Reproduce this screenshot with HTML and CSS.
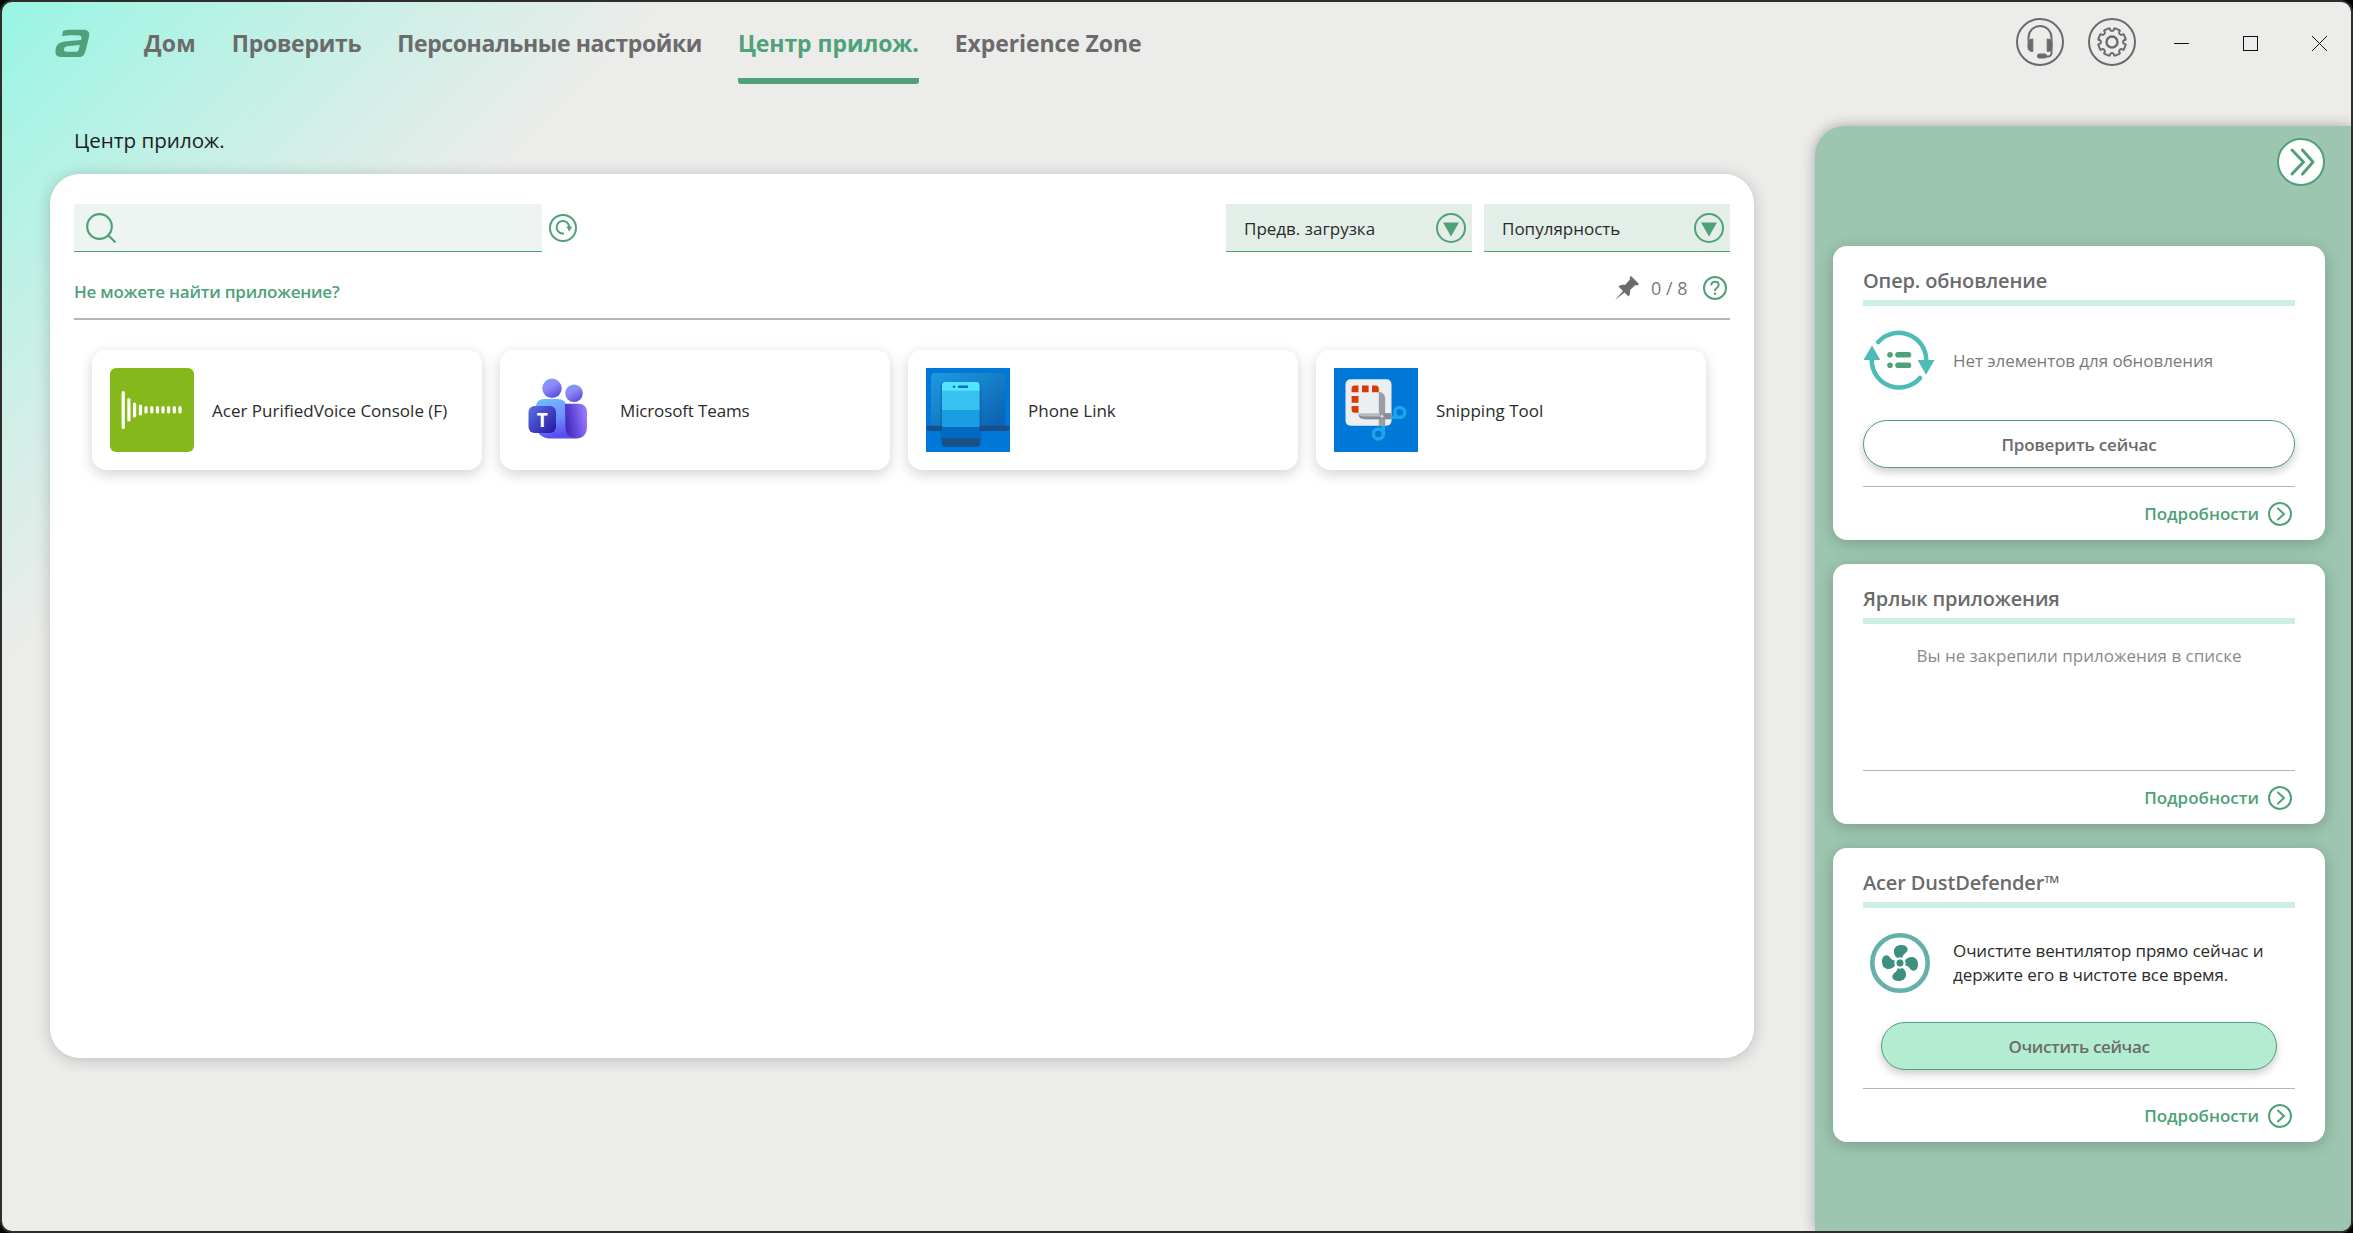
FILE: index.html
```html
<!DOCTYPE html>
<html lang="ru">
<head>
  <meta charset="UTF-8" />
  <title>Центр прилож.</title>
  <link rel="stylesheet" href="styles.css">
</head>
<body>
  <div class="window">
    <header class="topbar">
      <svg class="logo" width="36" height="28" viewBox="0 0 36 28">
        <path fill="#4ea178" fill-rule="evenodd" d="M8 2C10 1 13 .8 17 .8H28C33 .8 35 3 34 8L30.500 22C29.500 26 27.500 28 24 28H8C2 28 0 26.500 .5 21C1.500 14 6 12.800 12 12.200L26 11C27 8.200 26.500 6.800 24.500 6.600C19 6 12 6 7 7ZM12 17.300L24.800 15.900L23.800 20.500C23.300 22.300 22.500 22.800 21 22.800H11C8.300 22.800 8 17.800 12 17.300Z"/>
      </svg>
      <nav class="nav">
        <a class="nav-item nav-home">Дом</a>
        <a class="nav-item nav-check">Проверить</a>
        <a class="nav-item nav-personal">Персональные настройки</a>
        <a class="nav-item active">Центр прилож.</a>
        <a class="nav-item nav-zone">Experience Zone</a>
      </nav>
      <div class="actions">
        <svg width="48" height="48" viewBox="0 0 48 48" fill="none" stroke="#6b6b6b" stroke-width="2">
          <circle cx="24" cy="24" r="23"/>
          <path d="M12.500 23V19.500a11.500 11.500 0 0 1 23 0V35a3.500 3.500 0 0 1-3.500 3.500H28"/>
          <path d="M16.800 21v12.500c-3 0-4.800-1.500-4.800-4v-4.500c0-2.500 1.800-4 4.800-4zM31.200 21v12.500c3 0 4.800-1.500 4.800-4v-4.500c0-2.500-1.800-4-4.800-4z" fill="#6b6b6b" stroke-width="1"/>
          <rect x="22" y="36.500" width="8" height="3" rx="1.500" fill="#6b6b6b"/>
        </svg>
        <svg width="48" height="48" viewBox="-24 -24 48 48" fill="none" stroke="#6b6b6b" stroke-width="2">
          <circle r="23"/>
          <circle r="5.500" stroke-width="2.400"/>
          <path stroke-linejoin="round" d="M13.640-3.150Q14-2 12.500-2Q11-1.500 11 0Q11 1.500 12.500 2Q14 2 13.640 3.150L11.870 7.420Q11.300 8.300 10.300 7.300Q8.800 6.600 7.800 7.800Q6.600 8.800 7.300 10.300Q8.300 11.300 7.420 11.870L3.150 13.640Q2 14 2 12.500Q1.500 11 0 11Q-1.500 11-2 12.500Q-2 14-3.150 13.640L-7.420 11.870Q-8.300 11.300-7.300 10.300Q-6.600 8.800-7.800 7.800Q-8.800 6.600-10.300 7.300Q-11.300 8.300-11.870 7.420L-13.640 3.150Q-14 2-12.500 2Q-11 1.500-11 0Q-11-1.500-12.500-2Q-14-2-13.640-3.150L-11.870-7.420Q-11.300-8.300-10.300-7.300Q-8.800-6.600-7.800-7.800Q-6.600-8.800-7.300-10.300Q-8.300-11.300-7.420-11.870L-3.150-13.640Q-2-14-2-12.500Q-1.500-11 0-11Q1.500-11 2-12.500Q2-14 3.150-13.640L7.420-11.870Q8.300-11.300 7.300-10.300Q6.600-8.800 7.800-7.800Q8.800-6.600 10.300-7.300Q11.300-8.300 11.870-7.420Z"/>
        </svg>
      </div>
      <div class="controls">
        <svg width="15" height="15" viewBox="0 0 15 15"><path d="M0 7.500H15" stroke="#111"/></svg>
        <svg width="15" height="15" viewBox="0 0 15 15"><rect x=".5" y=".5" width="14" height="14" fill="none" stroke="#111"/></svg>
        <svg width="15" height="15" viewBox="0 0 15 15"><path d="M0 0L15 15M15 0L0 15" stroke="#111"/></svg>
      </div>
    </header>

    <div class="content">
      <main class="main">
        <h1 class="page-title">Центр прилож.</h1>
        <section class="panel">
          <div class="toolbar">
            <div class="search">
              <svg width="30" height="30" viewBox="0 0 30 30" fill="none" stroke="#4ea178" stroke-width="2.200">
                <circle cx="13.500" cy="13.500" r="12.300"/><path d="M22.500 22.500L29.500 29.500"/>
              </svg>
            </div>
            <svg class="refresh" width="28" height="28" viewBox="0 0 28 28" fill="none" stroke="#4ea178" stroke-width="2">
              <circle cx="14" cy="14" r="13"/>
              <path d="M15 19.500A6.300 6.300 0 1 1 20.200 13"/>
              <path d="M17.300 12.500h6l-3 5z" fill="#4ea178" stroke="none"/>
            </svg>
            <div class="selects">
              <div class="select">
                <span>Предв. загрузка</span>
                <svg width="30" height="30" viewBox="0 0 30 30"><circle cx="15" cy="15" r="14" fill="none" stroke="#4ea178" stroke-width="2"/><path d="M7 9.500H23L15 23.500Z" fill="#4ea178"/></svg>
              </div>
              <div class="select">
                <span>Популярность</span>
                <svg width="30" height="30" viewBox="0 0 30 30"><circle cx="15" cy="15" r="14" fill="none" stroke="#4ea178" stroke-width="2"/><path d="M7 9.500H23L15 23.500Z" fill="#4ea178"/></svg>
              </div>
            </div>
          </div>

          <div class="subbar">
            <a class="missing">Не можете найти приложение?</a>
            <div class="pins">
              <svg width="24" height="24" viewBox="0 0 24 24"><path fill="#6b6b6b" d="M16 0C14.500 1 14.500 2.500 15 3.500L10 9C8 8.500 5 9 3.500 10.500L8 15L0 24L9.500 16.500L13.500 20.500C15 19 15.500 16 15 14L20.500 9C21.500 9.500 23 9.500 24 8Z"/></svg>
              <span class="pin-count">0 / 8</span>
              <svg width="24" height="24" viewBox="0 0 24 24" fill="none" stroke="#4ea178" stroke-width="2">
                <circle cx="12" cy="12" r="11"/>
                <path d="M8.300 9.500C8.300 7 9.800 5.800 12 5.800S15.700 7.200 15.700 9.100C15.700 11.600 12 11.900 12 15"/>
                <circle cx="12" cy="17.800" r="1.300" fill="#4ea178" stroke="none"/>
              </svg>
            </div>
          </div>

          <div class="apps">
            <div class="app">
              <svg width="84" height="84" viewBox="0 0 84 84">
                <rect width="84" height="84" rx="6" fill="#84b81b"/>
                <g stroke="#fff" stroke-width="3.200" stroke-linecap="round">
                  <path d="M13.200 24.500V59.500M18.900 31.500V52M24.600 36V48M30.400 38V46M36 39.500V44M41.800 39.500V44M47.500 39.500V44M53 39.500V44M58.600 39.500V44M64.300 39.500V44M70 39.500V44"/>
                </g>
              </svg>
              <span>Acer PurifiedVoice Console (F)</span>
            </div>
            <div class="app">
              <svg width="84" height="84" viewBox="0 0 84 84">
                <defs>
                  <linearGradient id="head" x1="0" y1="0" x2=".6" y2="1"><stop offset="0" stop-color="#6ea8ff"/><stop offset=".5" stop-color="#8f86f5"/><stop offset="1" stop-color="#5a50e0"/></linearGradient>
                  <linearGradient id="body" x1="0" y1="0" x2=".3" y2="1"><stop offset="0" stop-color="#6fc0ff"/><stop offset=".6" stop-color="#6f8bff"/><stop offset="1" stop-color="#5a4ff0"/></linearGradient>
                  <linearGradient id="side" x1="0" y1=".6" x2="1" y2=".3"><stop offset="0" stop-color="#3c2bb5"/><stop offset=".5" stop-color="#6a4fe0"/><stop offset="1" stop-color="#a07cff"/></linearGradient>
                  <linearGradient id="tile" x1="0" y1="0" x2="1" y2="1"><stop offset="0" stop-color="#5a72e8"/><stop offset="1" stop-color="#2316a0"/></linearGradient>
                </defs>
                <circle cx="34" cy="20.300" r="9.700" fill="url(#head)"/>
                <circle cx="56" cy="25.300" r="8.800" fill="url(#head)"/>
                <path d="M26 31H40C45 31 48 34 48 38V60C48 66 52 70.500 58 70.500H32C24 70.500 18 65 18 57V39C18 34 21 31 26 31Z" fill="url(#body)"/>
                <path d="M47 35.700H60C66 35.700 69 39 69 44V59C69 66 65 70.500 58 70.500S47.500 66 47.500 59Z" fill="url(#side)"/>
                <rect x="10.500" y="38" width="27.500" height="27" rx="6" fill="url(#tile)"/>
                <text x="24.200" y="59" text-anchor="middle" class="tile-letter">T</text>
              </svg>
              <span class="name-teams">Microsoft Teams</span>
            </div>
            <div class="app">
              <svg width="84" height="84" viewBox="0 0 84 84">
                <defs>
                  <linearGradient id="screen" x1="0" y1="0" x2="1" y2="1"><stop offset="0" stop-color="#1e9ae0"/><stop offset="1" stop-color="#0b60b0"/></linearGradient>
                  <clipPath id="phone"><rect x="16" y="14" width="37.600" height="64.700" rx="3"/></clipPath>
                </defs>
                <rect width="84" height="84" fill="#0078d7"/>
                <path d="M5 58V9a4 4 0 0 1 4-4H75.300a4 4 0 0 1 4 4V58Z" fill="url(#screen)"/>
                <path d="M0 57.700H84V59a4 4 0 0 1-4 4H4A4 4 0 0 1 0 59Z" fill="#17508a"/>
                <rect x="14.500" y="14" width="40.600" height="64" rx="4" fill="#0a4d90" opacity=".35"/>
                <g clip-path="url(#phone)">
                  <rect x="16" y="14" width="38" height="9" fill="#50e6ff"/>
                  <rect x="16" y="22.700" width="38" height="20" fill="#37c2f1"/>
                  <rect x="16" y="42" width="38" height="17.500" fill="#1b9de2"/>
                  <rect x="16" y="59" width="38" height="12" fill="#0069c0"/>
                  <rect x="16" y="70.300" width="38" height="9" fill="#1a4f85"/>
                </g>
                <circle cx="28" cy="18.700" r="1.300" fill="#0d6fb8"/>
                <rect x="31.800" y="17.400" width="10.400" height="2.600" rx="1" fill="#0d6fb8"/>
              </svg>
              <span>Phone Link</span>
            </div>
            <div class="app">
              <svg width="84" height="84" viewBox="0 0 84 84">
                <rect width="84" height="84" fill="#0078d7"/>
                <rect x="11.500" y="11.300" width="46" height="46.500" rx="5" fill="#eceff2"/>
                <path fill="#d83b01" d="M17.600 24.200V20.600a3 3 0 0 1 3-3h3.900v6.600zM28 17.600h6.600v6.600H28zM38 17.600h3.700a3 3 0 0 1 3 3v3.600H38zM17.600 28h6.900v6.700h-6.900zM17.600 38h6.900v6.700h-3.900a3 3 0 0 1-3-3z"/>
                <path d="M44.800 24C49 24 51.200 27 51.200 31V58H44.800Z" fill="#9a9fa5"/>
                <path d="M24.500 45.200H57.500V51.200H31C27 51.200 24.500 49 24.500 45.200Z" fill="#b3bbc4"/>
                <path d="M24.500 46.500C26 48 28 48.500 30 48.500H57.500V51.200H31C27 51.200 24.500 49.500 24.500 46.500ZM46 45.200h11.500v6h-11.500z" fill="#858c95"/>
                <circle cx="48" cy="48.200" r="1.600" fill="#d5d9dd"/>
                <g fill="none" stroke="#1ba5ea" stroke-width="3.600">
                  <circle cx="65.800" cy="44.500" r="5"/>
                  <circle cx="44.400" cy="66" r="5"/>
                  <path d="M57.500 49.300H65M49.300 58V66"/>
                </g>
              </svg>
              <span>Snipping Tool</span>
            </div>
          </div>
        </section>
      </main>

      <aside class="sidebar">
        <svg class="collapse" width="48" height="48" viewBox="0 0 48 48" fill="none" stroke="#4ea178">
          <circle cx="24" cy="24" r="23" fill="#fff" stroke-width="2"/>
          <path d="M15 12L26.500 24L15 36M25.500 12L36 24L25.500 36" stroke-width="3" stroke-linecap="round" stroke-linejoin="round"/>
        </svg>

        <section class="card">
          <h2>Опер. обновление</h2>
          <div class="card-body">
            <div class="card-icon">
              <svg width="72" height="60" viewBox="0 0 72 60" fill="none" stroke="#4bbcb6" stroke-width="4.500" stroke-linecap="round">
                <path d="M15.300 12A27.500 27.500 0 0 1 63.300 30M8.700 30A27.500 27.500 0 0 0 57 48"/>
                <path d="M54.700 30H71.500L63 44.800ZM.5 30H17.300L9 15.500Z" fill="#4bbcb6" stroke="none"/>
                <g stroke="#4ea178" stroke-width="5.600"><path d="M27 24.700h.01M35 24.700H45.500M27 35.300h.01M35 35.300H45.500"/></g>
              </svg>
            </div>
            <p class="muted">Нет элементов для обновления</p>
          </div>
          <button class="btn">Проверить сейчас</button>
          <a class="more"><span>Подробности</span>
            <svg width="24" height="24" viewBox="0 0 24 24" fill="none" stroke="#4ea178" stroke-width="2"><circle cx="12" cy="12" r="11"/><path d="M10 6.500L16 12L10 17.500" stroke-linecap="round"/></svg>
          </a>
        </section>

        <section class="card card-shortcut">
          <h2>Ярлык приложения</h2>
          <p class="empty">Вы не закрепили приложения в списке</p>
          <a class="more"><span>Подробности</span>
            <svg width="24" height="24" viewBox="0 0 24 24" fill="none" stroke="#4ea178" stroke-width="2"><circle cx="12" cy="12" r="11"/><path d="M10 6.500L16 12L10 17.500" stroke-linecap="round"/></svg>
          </a>
        </section>

        <section class="card">
          <h2>Acer DustDefender™</h2>
          <div class="card-body">
            <div class="card-icon">
              <svg class="fan" width="60" height="60" viewBox="-30 -30 60 60">
                <circle r="27.700" fill="none" stroke="#66b0aa" stroke-width="4.600"/>
                <circle r="3.500" fill="#3d8f80"/>
                <g fill="#3d8f80">
                  <path id="blade" d="M-2.500-5C-7.500-8-8-18 1.500-18C6.500-18 9-14.500 7-11.500C5.500-9.500 3-9 2.500-5.300Q0-6.200-2.500-5Z"/>
                  <use href="#blade" transform="rotate(90)"/>
                  <use href="#blade" transform="rotate(180)"/>
                  <use href="#blade" transform="rotate(270)"/>
                </g>
              </svg>
            </div>
            <p class="dark">Очистите вентилятор прямо сейчас и<br>держите его в чистоте все время.</p>
          </div>
          <button class="btn btn-primary">Очистить сейчас</button>
          <a class="more"><span>Подробности</span>
            <svg width="24" height="24" viewBox="0 0 24 24" fill="none" stroke="#4ea178" stroke-width="2"><circle cx="12" cy="12" r="11"/><path d="M10 6.500L16 12L10 17.500" stroke-linecap="round"/></svg>
          </a>
        </section>
      </aside>
    </div>
  </div>
</body>
</html>
```
FILE: styles.css
```css
* { box-sizing: border-box; }
body { margin: 0; background: #000; font-family: "Open Sans", "Noto Sans", sans-serif; font-size: 17px; color: #2b2b2b; }
h1, h2, p { margin: 0; }
svg { display: block; flex: none; }

.window {
  width: 2353px;
  height: 1233px;
  border: 2px solid #2f2d2b;
  border-radius: 12px;
  overflow: hidden;
  display: flex;
  flex-direction: column;
  background: linear-gradient(135deg, #9bf5e4 20px, #c5f0e6 240px, #ececea 475px);
}

.topbar { height: 124px; display: flex; align-items: flex-start; flex: none; padding-left: 53px; }
.logo { margin-top: 27px; }
.nav { display: flex; gap: 36px; margin-left: 53px; }
.nav-item { height: 82px; line-height: 82px; font-size: 23px; font-weight: 700; color: #6b6b6b; white-space: nowrap; }
.nav-home { letter-spacing: .2px; }
.nav-check { letter-spacing: -.28px; }
.nav-personal { letter-spacing: -.41px; }
.nav-zone { letter-spacing: -.1px; }
.nav-item.active { color: #4ea178; border-bottom: 6px solid #4ea178; border-radius: 3px; letter-spacing: -.07px; }
.actions { display: flex; gap: 24px; margin: 16px 0 0 auto; }
.controls { display: flex; gap: 54px; margin: 34px 24px 0 38px; }

.content { display: flex; flex: 1; justify-content: space-between; }
.main { padding-left: 48px; }
.page-title { height: 48px; padding-left: 24px; line-height: 28px; font-size: 20.6px; font-weight: 500; color: #1e1e1e; }
.panel { width: 1704px; height: 884px; padding: 30px 24px; background: #fff; border-radius: 30px; box-shadow: 0 2px 16px rgba(0, 0, 0, .2); }

.toolbar { display: flex; align-items: center; height: 48px; }
.search { width: 468px; height: 48px; padding: 9px 12px; background: #eef4f2; border-bottom: 1px solid #4ea178; }
.refresh { margin-left: 7px; }
.selects { display: flex; gap: 12px; margin-left: auto; }
.select { width: 246px; height: 48px; padding: 0 6px 0 18px; display: flex; align-items: center; justify-content: space-between; background: #e4eee9; border-bottom: 1px solid #4ea178; }
.select span { padding-top: 2px; }

.subbar { display: flex; justify-content: space-between; height: 68px; border-bottom: 2px solid #b5b5b5; }
.missing { padding-top: 28px; font-weight: 600; letter-spacing: -.22px; color: #4ea178; }
.pins { display: flex; gap: 12px; padding: 24px 3px 0 0; line-height: 25px; color: #7a7a7a; }
.pin-count { width: 40px; font-size: 18px; }

.apps { display: flex; gap: 18px; padding: 30px 18px; }
.app { width: 390px; height: 120px; padding: 18px; display: flex; align-items: center; gap: 18px; border-radius: 14px; background: #fff; box-shadow: 0 4px 14px rgba(0, 0, 0, .18); white-space: nowrap; }
.name-teams { letter-spacing: -.14px; }
.tile-letter { font: 700 19px "Open Sans", sans-serif; fill: #fff; }

.sidebar { width: 536px; padding: 12px 26px 0 18px; display: flex; flex-direction: column; background: #9dc6b0; border-top-left-radius: 30px; box-shadow: 0 0 14px rgba(0, 0, 0, .3); }
.collapse { align-self: flex-end; margin-bottom: 60px; }
.card { height: 294px; margin-bottom: 24px; padding: 18px 30px 0; display: flex; flex-direction: column; flex: none; background: #fff; border-radius: 14px; box-shadow: 0 3px 16px rgba(0, 0, 0, .22); }
.card-shortcut { height: 258px; height: 260px; }
.card h2 { height: 42px; line-height: 34px; font-size: 20px; font-weight: 600; letter-spacing: -.15px; color: #6b6b6b; border-bottom: 6px solid #cbeee5; }
.card-body { display: flex; align-items: center; height: 108px; }
.card-icon { width: 90px; }
.fan { margin: 2px 0 0 7px; }
.muted { color: #7a7a7a; letter-spacing: -.07px; }
.dark { padding-top: 2px; line-height: 24px; white-space: nowrap; letter-spacing: -.09px; }
.empty { padding-top: 20px; height: 146px; text-align: center; color: #8a8a8a; }
.btn { height: 48px; margin: 6px 0 18px; border: 1px solid #4ea178; border-radius: 24px; background: #fff; font-family: inherit; font-size: 17px; font-weight: 600; letter-spacing: -.17px; color: #6b6b6b; box-shadow: 0 4px 8px rgba(0, 0, 0, .2); }
.btn-primary { margin: 6px 18px 18px; background: #b3ecd1; letter-spacing: -.35px; }
.more { display: flex; justify-content: flex-end; gap: 9px; padding: 15px 3px 0 0; border-top: 1px solid #b5b5b5; line-height: 24px; font-weight: 600; color: #4ea178; }
```
